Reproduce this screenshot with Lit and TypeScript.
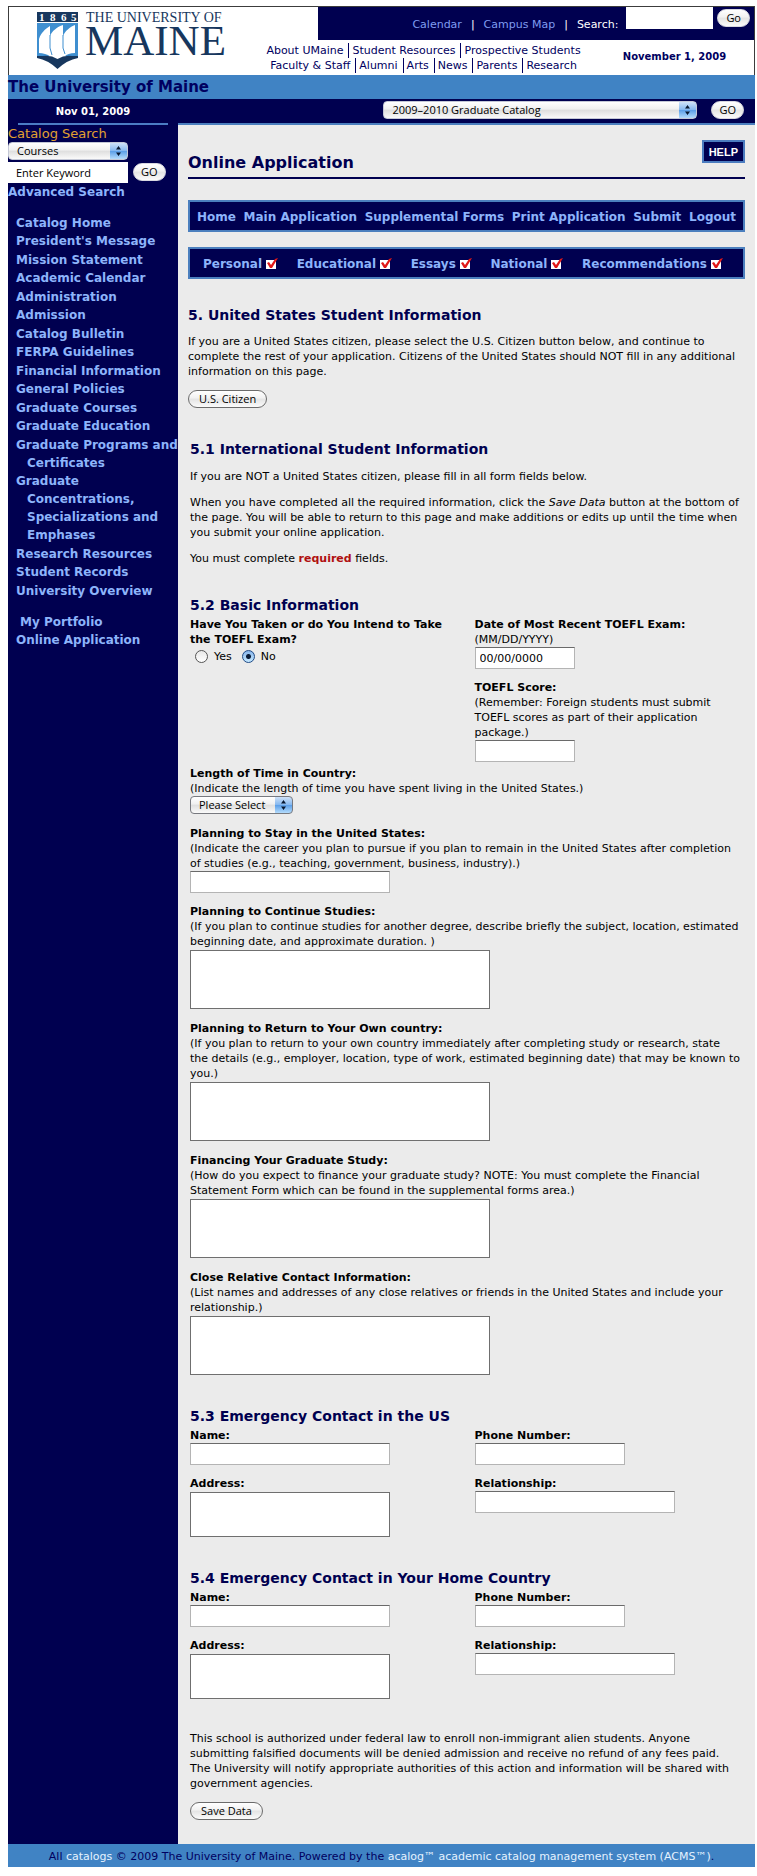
import { LitElement, html, css, svg, nothing } from "lit";
import { customElement } from "lit/decorators.js";

interface NavItem {
  label: string;
  indent?: boolean;
}

const CATALOG_LINKS = [
  "Catalog Home",
  "President's Message",
  "Mission Statement",
  "Academic Calendar",
  "Administration",
  "Admission",
  "Catalog Bulletin",
  "FERPA Guidelines",
  "Financial Information",
  "General Policies",
  "Graduate Courses",
  "Graduate Education",
  "Graduate Programs and Certificates",
  "Graduate Concentrations, Specializations and Emphases",
  "Research Resources",
  "Student Records",
  "University Overview",
];

const ACCOUNT_LINKS: NavItem[] = [
  { label: "My Portfolio", indent: true },
  { label: "Online Application" },
];

const SITE_LINKS = [
  ["About UMaine", "Student Resources", "Prospective Students"],
  ["Faculty & Staff", "Alumni", "Arts", "News", "Parents", "Research"],
];

const MENU = ["Home", "Main Application", "Supplemental Forms", "Print Application", "Submit", "Logout"];
const STEPS = ["Personal", "Educational", "Essays", "National", "Recommendations"];

const ESSAYS = [
  {
    id: "continue",
    label: "Planning to Continue Studies:",
    hint: "(If you plan to continue studies for another degree, describe briefly the subject, location, estimated beginning date, and approximate duration. )",
  },
  {
    id: "return",
    label: "Planning to Return to Your Own country:",
    hint: html`(If you plan to return to your own country immediately after completing study or research, state<br />
      the details (e.g., employer, location, type of work, estimated beginning date) that may be known to you.)`,
  },
  {
    id: "financing",
    label: "Financing Your Graduate Study:",
    hint: "(How do you expect to finance your graduate study? NOTE: You must complete the Financial Statement Form which can be found in the supplemental forms area.)",
  },
  {
    id: "relative",
    label: "Close Relative Contact Information:",
    hint: "(List names and addresses of any close relatives or friends in the United States and include your relationship.)",
  },
];

const controls = css`
  * {
    box-sizing: border-box;
  }
  a {
    color: inherit;
    text-decoration: none;
  }
  .aqua-button {
    height: 18px;
    padding: 0 10px;
    border: 1px solid #6b6b6b;
    border-radius: 9px;
    background: linear-gradient(#ffffff, #f1f1f1 45%, #e4e4e4 50%, #fbfbfb);
    color: #000;
    font: 11px/14px "Open Sans", "Noto Sans", sans-serif;
    white-space: nowrap;
  }
  .on-dark {
    padding: 0 7px;
    border-color: #d8d8e0;
  }
  .aqua-select {
    height: 18px;
    padding: 0 22px 0 8px;
    border: 1px solid #77797f;
    border-radius: 4px;
    appearance: none;
    color: #000;
    font: 11px/14px "Open Sans", "Noto Sans", sans-serif;
    background:
      url("data:image/svg+xml,%3Csvg xmlns='http://www.w3.org/2000/svg' width='17' height='16'%3E%3Cpath d='M8.500 3l2.500 3.500h-5zM8.500 13l2.500-3.500h-5z' fill='%23081830'/%3E%3C/svg%3E") right center no-repeat,
      linear-gradient(#cfe2f8, #86b8ef 48%, #5c9fe8 52%, #b4dcfc) right / 17px 100% no-repeat,
      linear-gradient(#ffffff, #f0f0f0 45%, #dedede 50%, #fafafa);
  }
  .aqua-select.on-dark {
    border-color: #c4c8d6;
    padding: 0 22px 0 8px;
  }
`;

@customElement("maine-logo")
export class MaineLogo extends LitElement {
  static styles = css`
    :host {
      display: block;
    }
    .mark {
      display: block;
      overflow: visible;
    }
    .word {
      font-family: "Liberation Serif", serif;
      fill: #17375e;
    }
    .large {
      font-size: 43px;
    }
    .small {
      font-size: 14px;
    }
    .year {
      font-size: 11px;
      font-weight: bold;
      fill: #fff;
    }
  `;

  render() {
    return html`
      <svg class="mark" width="192" height="58" viewBox="0 0 192 58" role="img" aria-label="1865 The University of Maine">
        ${svg`
          <rect x="0" y="0" width="41" height="10" fill="#17375e" />
          <text class="word year" y="9"><tspan x="2">1</tspan><tspan x="13">8</tspan><tspan x="24">6</tspan><tspan x="34">5</tspan></text>
          <rect x="0" y="11" width="41" height="33" fill="#3f8fd0" />
          <path d="M2 41V27C4 21 8 17 13 14V24C15 19 20 15 26 13V24C28 19 33 15 38 13V41C33 41 30 42 27 45L20 46L14 45C10 42 6 41 2 41Z" fill="#fff" />
          <path d="M13 23V36L15 43M26 23V36L28 42" fill="none" stroke="#3f8fd0" stroke-width="1" />
          <path d="M0 44L6 44Q14 43 20.500 47Q27 43 35 44L41 44V46Q30 48 20.500 57Q11 48 0 46Z" fill="#17375e" />
          <text class="word small" x="49" y="10">THE UNIVERSITY OF</text>
          <text class="word large" x="48" y="43">MAINE</text>
        `}
      </svg>
    `;
  }
}

@customElement("site-header")
export class SiteHeader extends LitElement {
  static styles = [
    controls,
    css`
      :host {
        display: block;
      }
      .masthead {
        display: grid;
        grid-template-columns: 259px 50px 1fr;
        grid-template-rows: 33px 35px;
        border: solid #3c3c3c;
        border-width: 1px 1px 0;
        background: #fff;
      }
      .logo {
        grid-row: 1 / 3;
        padding: 5px 0 0 28px;
      }
      .utility {
        grid-column: 3;
        display: flex;
        justify-content: flex-end;
        padding-right: 4px;
        background: #000050;
        color: #fff;
        font-size: 11px;
        line-height: 36px;
      }
      .utility a {
        color: #7f9cf0;
      }
      .divider {
        padding: 0 9px;
      }
      .site-search {
        display: flex;
        gap: 4px;
      }
      .site-search input {
        width: 87px;
        height: 22px;
        margin-left: 4px;
        border: 0;
        padding: 0 4px;
        background: #fff;
      }
      .site-search button {
        margin-top: 2px;
        padding: 0 8px;
      }
      .site-row {
        grid-column: 2 / 4;
        display: flex;
        color: #000060;
      }
      .site-links {
        width: 313px;
        padding-top: 3px;
        font-size: 11px;
        line-height: 15px;
      }
      .link-line {
        display: flex;
        justify-content: center;
        white-space: nowrap;
      }
      .link-line a {
        padding: 0 5px 0 3px;
        border-right: 1px solid #000060;
      }
      .link-line a:last-child {
        border-right: 0;
      }
      .today {
        flex: 1;
        padding: 9px 0 0 14px;
        font-size: 10px;
        font-weight: bold;
        line-height: 15px;
        text-align: center;
      }
      .banner {
        margin: 0;
        height: 24px;
        background: #4083c4;
        color: #000060;
        font-size: 15px;
        line-height: 24px;
      }
    `,
  ];

  render() {
    return html`
      <div class="masthead">
        <maine-logo class="logo"></maine-logo>
        <div class="utility">
          <a href="#calendar">Calendar</a><span class="divider">|</span>
          <a href="#map">Campus Map</a><span class="divider">|</span>
          <div class="site-search">
            <label for="site-search">Search:</label>
            <input id="site-search" type="text" />
            <button class="aqua-button on-dark" type="button">Go</button>
          </div>
        </div>
        <div class="site-row">
          <nav class="site-links">
            ${SITE_LINKS.map(
              (line) => html`<div class="link-line">${line.map((l) => html`<a href="#site">${l}</a>`)}</div>`
            )}
          </nav>
          <div class="today">November 1, 2009</div>
        </div>
      </div>
      <h1 class="banner">The University of Maine</h1>
    `;
  }
}

@customElement("catalog-sidebar")
export class CatalogSidebar extends LitElement {
  static styles = [
    controls,
    css`
      :host {
        display: block;
        background: #000050;
        color: #8db4fb;
        font-size: 12px;
        font-weight: bold;
        line-height: 18px;
      }
      .date {
        margin: 0 10px;
        height: 26px;
        border-bottom: 2px solid #4b7cc4;
        color: #fff;
        font-size: 10px;
        line-height: 25px;
        text-align: center;
      }
      .search {
        display: grid;
        grid-template-columns: 120px auto;
        justify-content: start;
        column-gap: 5px;
      }
      .search-title {
        grid-column: 1 / 3;
        padding-top: 1px;
        color: #e0a030;
        font-size: 13px;
        font-weight: normal;
        line-height: 16px;
      }
      .search select {
        grid-column: 1;
        margin-bottom: 2px;
      }
      .search input {
        grid-column: 1;
        height: 21px;
        padding: 0 8px;
        border: 0;
        background: #fff;
        color: #000;
        font: 11px/14px "Open Sans", "Noto Sans", sans-serif;
      }
      .search .aqua-button {
        margin-top: 1px;
      }
      .advanced {
        display: block;
      }
      .links {
        list-style: none;
        margin: 13px 0 0;
        padding: 0 0 0 19px;
      }
      .links li {
        text-indent: -11px;
      }
      .links li:nth-child(even) {
        margin-bottom: 1px;
      }
      .links .indent {
        text-indent: -7px;
      }
    `,
  ];

  render() {
    return html`
      <div class="date">Nov 01, 2009</div>
      <form class="search">
        <label class="search-title" for="catalog-kind">Catalog Search</label>
        <select id="catalog-kind" class="aqua-select on-dark">
          <option>Courses</option>
        </select>
        <input type="text" value="Enter Keyword" aria-label="Keyword" />
        <button class="aqua-button on-dark" type="button">GO</button>
      </form>
      <a class="advanced" href="#advanced">Advanced Search</a>
      <ul class="links">
        ${CATALOG_LINKS.map((l) => html`<li><a href="#catalog">${l}</a></li>`)}
      </ul>
      <ul class="links">
        ${ACCOUNT_LINKS.map(
          (l) => html`<li class=${l.indent ? "indent" : nothing}><a href="#account">${l.label}</a></li>`
        )}
      </ul>
    `;
  }
}

@customElement("application-form")
export class ApplicationForm extends LitElement {
  static styles = [
    controls,
    css`
      :host {
        display: block;
        padding: 15px 10px 24px;
        color: #000;
        font-size: 11px;
        line-height: 15px;
      }
      .title-row {
        display: flex;
        justify-content: space-between;
        height: 39px;
        border-bottom: 2px solid #000050;
      }
      h2,
      h3 {
        margin: 0;
        color: #000050;
      }
      h2 {
        padding-top: 13px;
        font-size: 16px;
        line-height: 20px;
      }
      h3 {
        font-size: 14px;
        line-height: 20px;
      }
      .help {
        height: 23px;
        padding: 0 5px;
        border: 2px solid #4b7cc0;
        background: #000050;
        color: #fff;
        font-size: 11px;
        font-weight: bold;
        line-height: 20px;
      }
      .bar {
        display: flex;
        align-items: center;
        justify-content: space-between;
        height: 32px;
        margin-top: 21px;
        padding: 2px 7px 0;
        border: 2px solid #4b7fbe;
        background: #000050;
        color: #8db4fb;
        font-size: 12px;
        font-weight: bold;
        white-space: nowrap;
      }
      .bar + .bar {
        margin-top: 15px;
      }
      .bar.steps {
        padding: 2px 20px 0 13px;
      }
      .step {
        display: flex;
        align-items: center;
        gap: 4px;
      }
      .citizen {
        margin: 26px 0 31px;
      }
      p {
        margin: 0 0 11px;
      }
      .citizen p {
        margin: 9px 0 11px;
      }
      .body {
        padding: 0 2px;
      }
      .intro {
        margin-top: 10px;
      }
      .required {
        color: #b01010;
      }
      .sub {
        margin-top: 19px;
      }
      .intro + .sub {
        margin-top: 29px;
      }
      .columns {
        display: grid;
        grid-template-columns: 1fr 1fr;
        column-gap: 16px;
        padding-top: 2px;
      }
      .exam {
        margin-bottom: -7px;
      }
      .field {
        padding-bottom: 11px;
      }
      .field label,
      .legend {
        font-weight: bold;
        display: block;
      }
      .half {
        padding-right: 20px;
      }
      fieldset {
        min-width: 0;
        margin: 0;
        padding: 0;
        border: 0;
      }
      .text {
        display: block;
        width: 200px;
        height: 22px;
        padding: 0 4px;
        border: 1px solid #b4b4b4;
        border-top: 1px solid #6a6a6a;
        border-radius: 0;
        background: #fff;
        font: 11px/15px "DejaVu Sans", sans-serif;
      }
      .narrow {
        width: 100px;
      }
      .medium {
        width: 150px;
      }
      textarea {
        display: block;
        width: 300px;
        height: 59px;
        margin: 1px 0;
        padding: 2px;
        border: 1px solid #6f6f6f;
        background: #fff;
        font: inherit;
        resize: none;
      }
      .address {
        width: 200px;
        height: 45px;
      }
      .aqua-select {
        display: block;
        width: 103px;
        margin-bottom: 1px;
      }
      .radios {
        display: flex;
        align-items: center;
        padding: 2px 0 0 5px;
      }
      .radios label {
        font-weight: normal;
        padding: 0 10px 0 6px;
      }
      .radios input {
        appearance: none;
        width: 13px;
        height: 13px;
        margin: 0;
        border: 1px solid #555;
        border-radius: 50%;
        background: linear-gradient(#e8e8e8, #ffffff);
      }
      .radios input:checked {
        border-color: #1f4a86;
        background:
          radial-gradient(circle, #0a1c38 0 2px, transparent 3px),
          linear-gradient(#86b4ea, #c5e8ff);
      }
      .closing {
        margin-top: 20px;
      }
    `,
  ];

  private textField(id: string, label: string, size = "") {
    return html`
      <div class="field">
        <label for=${id}>${label}</label>
        <input id=${id} class="text ${size}" type="text" />
      </div>
    `;
  }

  private contact(prefix: string, title: string) {
    return html`
      <h3 class="sub">${title}</h3>
      <div class="columns">
        ${this.textField(`${prefix}-name`, "Name:")}
        ${this.textField(`${prefix}-phone`, "Phone Number:", "medium")}
        <div class="field">
          <label for="${prefix}-address">Address:</label>
          <textarea id="${prefix}-address" class="address"></textarea>
        </div>
        ${this.textField(`${prefix}-relationship`, "Relationship:")}
      </div>
    `;
  }

  private check() {
    return html`
      <svg width="12" height="12" viewBox="0 0 12 12" aria-hidden="true">
        <rect x="0" y="2" width="10" height="9" fill="#fff" />
        <path d="M1 5L3 4L5 7L9 1L12 0L6 10H4Z" fill="#e01818" />
      </svg>
    `;
  }

  render() {
    return html`
      <div class="title-row">
        <h2>Online Application</h2>
        <button class="help" type="button">HELP</button>
      </div>
      <nav class="bar">${MENU.map((m) => html`<a href="#menu">${m}</a>`)}</nav>
      <nav class="bar steps">
        ${STEPS.map((s) => html`<a class="step" href="#step">${s} ${this.check()}</a>`)}
      </nav>

      <section class="citizen">
        <h3>5. United States Student Information</h3>
        <p>
          If you are a United States citizen, please select the U.S. Citizen button below, and continue to complete the
          rest of your application. Citizens of the United States should NOT fill in any additional information on this
          page.
        </p>
        <button class="aqua-button" type="button">U.S. Citizen</button>
      </section>

      <form class="body">
        <h3>5.1 International Student Information</h3>
        <div class="intro">
          <p>If you are NOT a United States citizen, please fill in all form fields below.</p>
          <p>
            When you have completed all the required information, click the <em>Save Data</em> button at the bottom of
            the page. You will be able to return to this page and make additions or edits up until the time when you
            submit your online application.
          </p>
          <p>You must complete <strong class="required">required</strong> fields.</p>
        </div>

        <h3 class="sub">5.2 Basic Information</h3>
        <div class="columns exam">
          <fieldset role="radiogroup" aria-labelledby="taken">
            <span id="taken" class="legend">Have You Taken or do You Intend to Take the TOEFL Exam?</span>
            <div class="radios">
              <input id="toefl-yes" type="radio" name="toefl" /><label for="toefl-yes">Yes</label>
              <input id="toefl-no" type="radio" name="toefl" checked /><label for="toefl-no">No</label>
            </div>
          </fieldset>
          <div>
            <div class="field">
              <label for="toefl-date">Date of Most Recent TOEFL Exam:</label>
              (MM/DD/YYYY)
              <input id="toefl-date" class="text narrow" type="text" value="00/00/0000" />
            </div>
            <div class="field half">
              <label for="toefl-score">TOEFL Score:</label>
              (Remember: Foreign students must submit TOEFL scores as part of their application package.)
              <input id="toefl-score" class="text narrow" type="text" />
            </div>
          </div>
        </div>
        <div class="field">
          <label for="length">Length of Time in Country:</label>
          (Indicate the length of time you have spent living in the United States.)
          <select id="length" class="aqua-select">
            <option>Please Select</option>
          </select>
        </div>
        <div class="field">
          <label for="stay">Planning to Stay in the United States:</label>
          (Indicate the career you plan to pursue if you plan to remain in the United States after completion of studies
          (e.g., teaching, government, business, industry).)
          <input id="stay" class="text" type="text" />
        </div>
        ${ESSAYS.map(
          (e) => html`
            <div class="field">
              <label for=${e.id}>${e.label}</label>
              ${e.hint}
              <textarea id=${e.id}></textarea>
            </div>
          `
        )}
        ${this.contact("us", "5.3 Emergency Contact in the US")}
        ${this.contact("home", "5.4 Emergency Contact in Your Home Country")}
        <p class="closing">
          This school is authorized under federal law to enroll non-immigrant alien students. Anyone submitting
          falsified documents will be denied admission and receive no refund of any fees paid. The University will
          notify appropriate authorities of this action and information will be shared with government agencies.
        </p>
        <button class="aqua-button" type="button">Save Data</button>
      </form>
    `;
  }
}

@customElement("app-root")
export class AppRoot extends LitElement {
  static styles = [
    controls,
    css`
      :host {
        display: block;
        padding: 6px 2px 9px 8px;
        background: #fff;
        font-family: "DejaVu Sans", Verdana, sans-serif;
      }
      .layout {
        display: grid;
        grid-template-columns: 170px 1fr;
      }
      .content {
        background: #ebebeb;
      }
      .picker {
        display: flex;
        justify-content: flex-end;
        align-items: flex-start;
        gap: 14px;
        height: 26px;
        padding: 2px 11px 0 0;
        border-bottom: 2px solid #4b7fbe;
        background: #000050;
      }
      .picker select {
        flex: 0 1 314px;
      }
      footer {
        height: 23px;
        background: #4083c4;
        color: #000060;
        font-size: 11px;
        line-height: 25px;
        text-align: center;
      }
      footer a {
        color: #e4f2ff;
      }
    `,
  ];

  render() {
    return html`
      <site-header></site-header>
      <div class="layout">
        <catalog-sidebar></catalog-sidebar>
        <main class="content">
          <div class="picker">
            <select class="aqua-select on-dark" aria-label="Catalog">
              <option>2009–2010 Graduate Catalog</option>
            </select>
            <button class="aqua-button on-dark" type="button">GO</button>
          </div>
          <application-form></application-form>
        </main>
      </div>
      <footer>
        All <a href="#catalogs">catalogs</a> © 2009 The University of Maine. Powered by the
        <a href="#acalog">acalog™ academic catalog management system (ACMS™)</a>.
      </footer>
    `;
  }
}
